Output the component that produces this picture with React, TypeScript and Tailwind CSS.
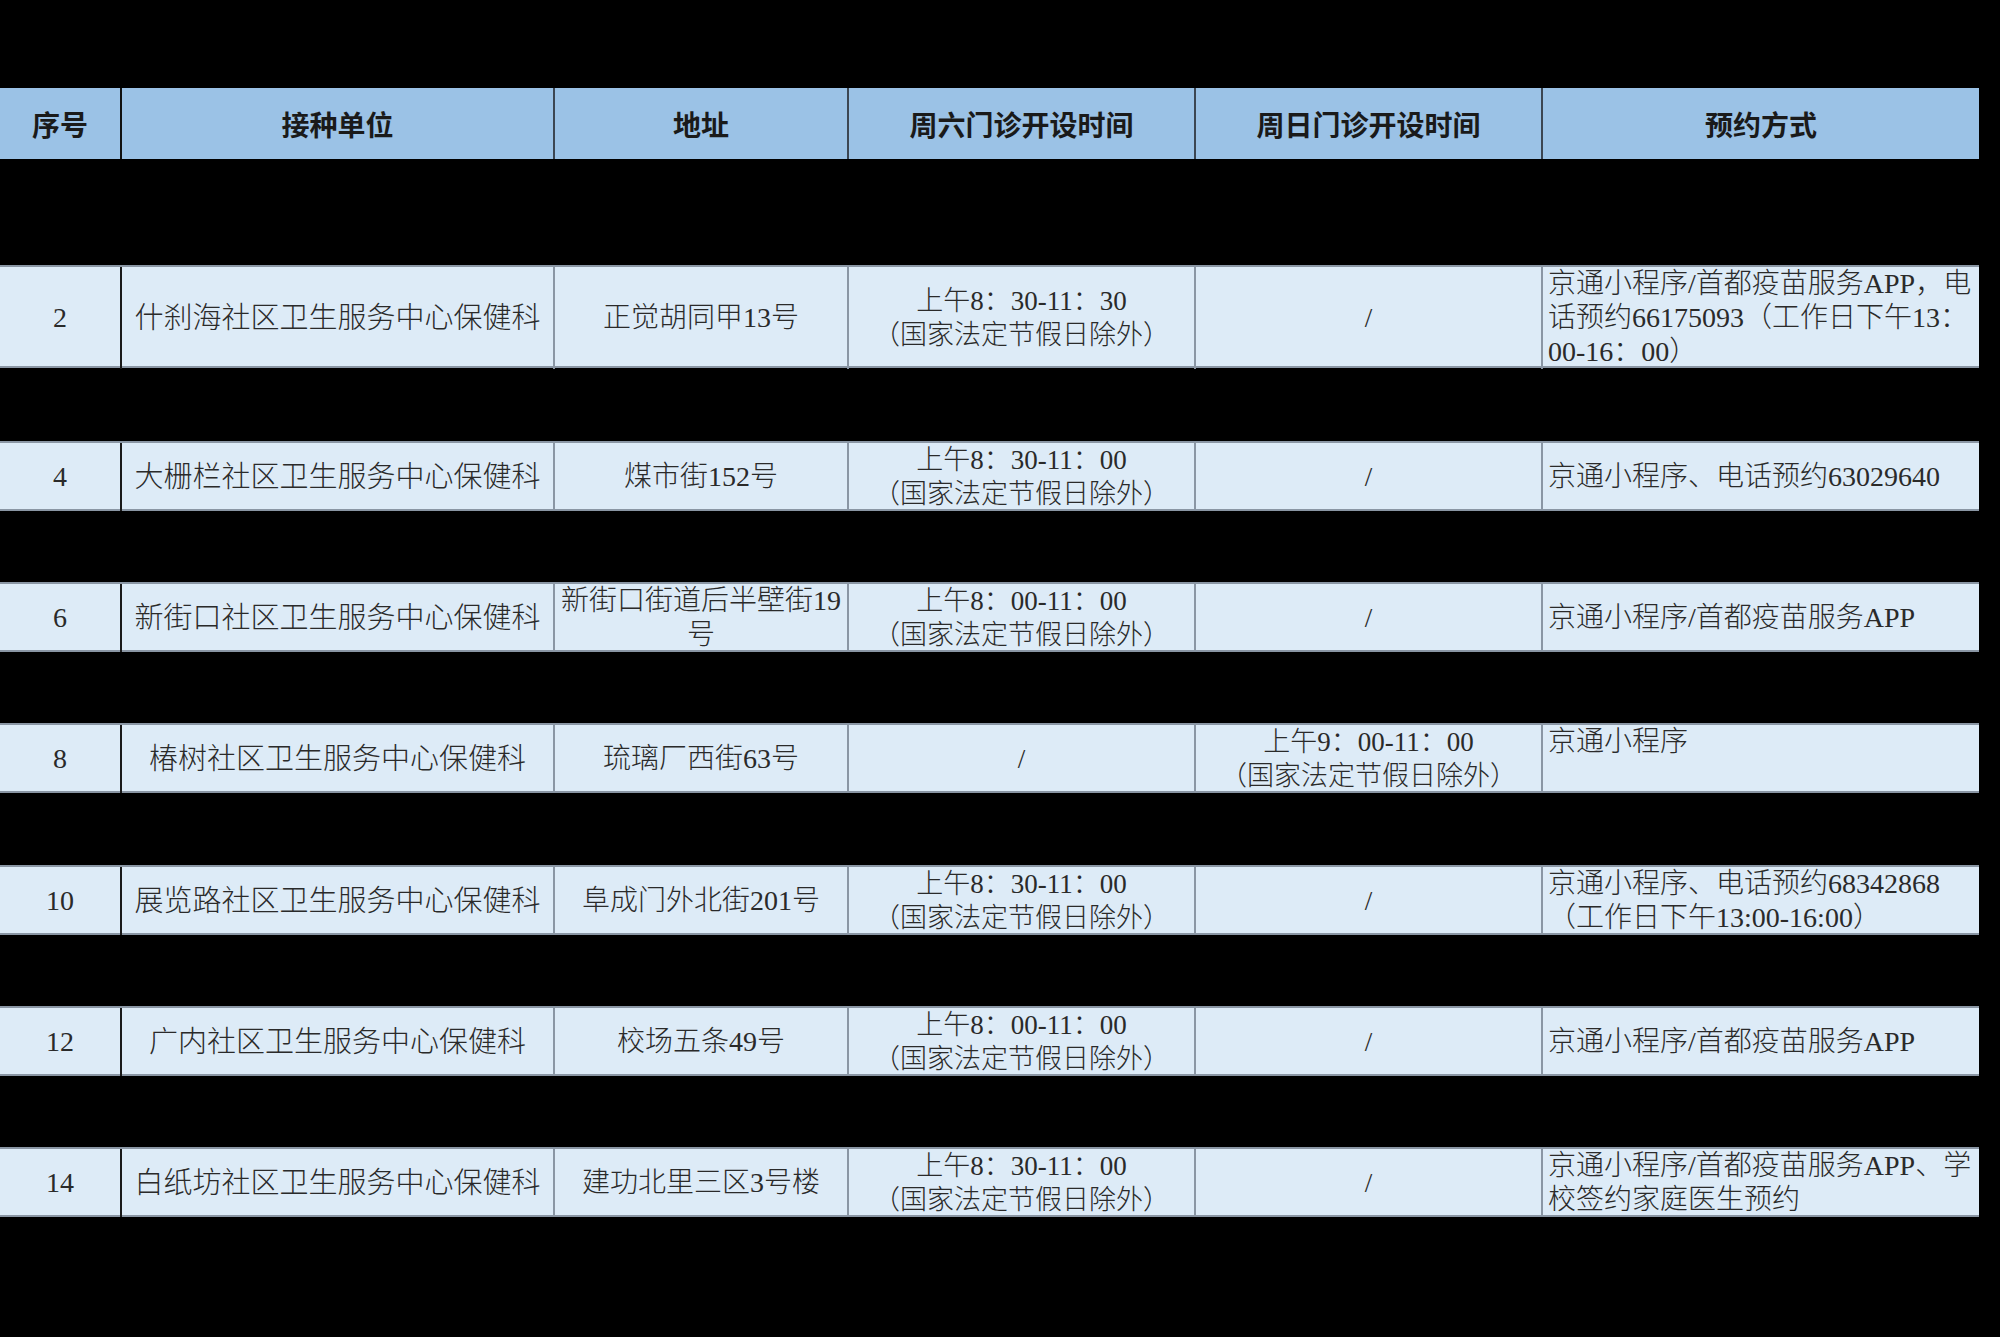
import React from "react";

type Row = {
  no: string;
  unit: string;
  addr: React.ReactNode;
  sat: React.ReactNode;
  sun: React.ReactNode;
  book: React.ReactNode;
  bookTop?: boolean;
  h: string;
  gap: string;
};

const hours = (t: string) => (
  <>
    {t}
    <br />
    （国家法定节假日除外）
  </>
);

const rows: Row[] = [
  {
    no: "2",
    unit: "什刹海社区卫生服务中心保健科",
    addr: "正觉胡同甲13号",
    sat: hours("上午8：30-11：30"),
    sun: "/",
    book: (
      <>
        京通小程序/首都疫苗服务APP，电
        <br />
        话预约66175093（工作日下午13：
        <br />
        00-16：00）
      </>
    ),
    h: "h-[103px]",
    gap: "h-[106px]",
  },
  {
    no: "4",
    unit: "大栅栏社区卫生服务中心保健科",
    addr: "煤市街152号",
    sat: hours("上午8：30-11：00"),
    sun: "/",
    book: "京通小程序、电话预约63029640",
    h: "h-[70px]",
    gap: "h-[73px]",
  },
  {
    no: "6",
    unit: "新街口社区卫生服务中心保健科",
    addr: (
      <>
        新街口街道后半壁街19
        <br />号
      </>
    ),
    sat: hours("上午8：00-11：00"),
    sun: "/",
    book: "京通小程序/首都疫苗服务APP",
    h: "h-[70px]",
    gap: "h-[71px]",
  },
  {
    no: "8",
    unit: "椿树社区卫生服务中心保健科",
    addr: "琉璃厂西街63号",
    sat: "/",
    sun: hours("上午9：00-11：00"),
    book: "京通小程序",
    bookTop: true,
    h: "h-[70px]",
    gap: "h-[71px]",
  },
  {
    no: "10",
    unit: "展览路社区卫生服务中心保健科",
    addr: "阜成门外北街201号",
    sat: hours("上午8：30-11：00"),
    sun: "/",
    book: (
      <>
        京通小程序、电话预约68342868
        <br />
        （工作日下午13:00-16:00）
      </>
    ),
    h: "h-[70px]",
    gap: "h-[72px]",
  },
  {
    no: "12",
    unit: "广内社区卫生服务中心保健科",
    addr: "校场五条49号",
    sat: hours("上午8：00-11：00"),
    sun: "/",
    book: "京通小程序/首都疫苗服务APP",
    h: "h-[70px]",
    gap: "h-[71px]",
  },
  {
    no: "14",
    unit: "白纸坊社区卫生服务中心保健科",
    addr: "建功北里三区3号楼",
    sat: hours("上午8：30-11：00"),
    sun: "/",
    book: (
      <>
        京通小程序/首都疫苗服务APP、学
        <br />
        校签约家庭医生预约
      </>
    ),
    h: "h-[70px]",
    gap: "h-[71px]",
  },
];

const headers = ["序号", "接种单位", "地址", "周六门诊开设时间", "周日门诊开设时间", "预约方式"];

const grid = "grid grid-cols-[122px_433px_294px_347px_347px_436px] w-[1979px]";
const serif = "font-['Liberation_Serif','Noto_Sans_CJK_SC',serif] font-light text-[#2a2a2a]";
const cell = "flex items-center justify-center text-center whitespace-nowrap border-r-2 border-[#8a96a4]";

export default function App() {
  return (
    <div className="w-[2000px] h-[1337px] bg-black overflow-hidden pt-[88px]">
      <div
        className={`${grid} h-[71px] bg-[#9bc2e6] font-['Noto_Sans_CJK_SC',sans-serif] font-bold text-[28px] text-[#1a1a1a]`}
      >
        {headers.map((h, i) => (
          <div
            key={h}
            className={`flex items-center justify-center ${i < 5 ? "border-r-2" : ""} ${i === 0 ? "border-[#111]" : "border-[#3c4652]"}`}
          >
            {h}
          </div>
        ))}
      </div>

      {rows.map((r) => (
        <div key={r.no}>
          <div className={r.gap} />
          <div
            className={`${grid} ${r.h} ${serif} bg-[#ddebf7] border-y-2 border-[#8a96a4] leading-[34px]`}
          >
            <div className={`${cell} !border-[#1a1a1a] text-[28px]`}>{r.no}</div>
            <div className={`${cell} text-[29px]`}>{r.unit}</div>
            <div className={`${cell} text-[28px]`}>{r.addr}</div>
            <div className={`${cell} text-[27px]`}>{r.sat}</div>
            <div className={`${cell} text-[27px] border-[#3c4652]`}>{r.sun}</div>
            <div
              className={`flex ${r.bookTop ? "items-start" : "items-center"} pl-[5px] whitespace-nowrap text-[28px]`}
            >
              <div>{r.book}</div>
            </div>
          </div>
        </div>
      ))}
    </div>
  );
}
